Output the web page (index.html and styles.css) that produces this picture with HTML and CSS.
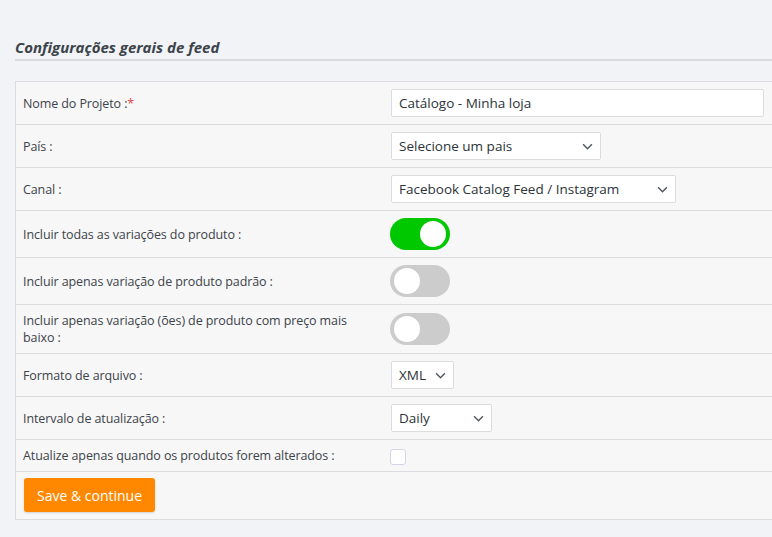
FILE: index.html
```html
<!DOCTYPE html>
<html lang="pt">
<head>
  <meta charset="UTF-8">
  <title>Configurações gerais de feed</title>
  <link rel="stylesheet" href="styles.css">
</head>
<body>
  <div class="wrap">
    <h2 class="title">Configurações gerais de feed</h2>

    <table class="form-table">
      <tr>
        <th>Nome do Projeto :<span class="req">*</span></th>
        <td><input type="text" class="text-input" value="Catálogo - Minha loja"></td>
      </tr>
      <tr>
        <th>País :</th>
        <td>
          <span class="select-box w-country">
            <select><option>Selecione um pais</option></select>
            <svg viewBox="0 0 10 6"><path d="M1 1l4 4 4-4" /></svg>
          </span>
        </td>
      </tr>
      <tr>
        <th>Canal :</th>
        <td>
          <span class="select-box w-channel">
            <select><option>Facebook Catalog Feed / Instagram</option></select>
            <svg viewBox="0 0 10 6"><path d="M1 1l4 4 4-4" /></svg>
          </span>
        </td>
      </tr>
      <tr>
        <th>Incluir todas as variações do produto :</th>
        <td><span class="toggle on"><span class="knob"></span></span></td>
      </tr>
      <tr>
        <th>Incluir apenas variação de produto padrão :</th>
        <td><span class="toggle"><span class="knob"></span></span></td>
      </tr>
      <tr>
        <th>Incluir apenas variação (ões) de produto com preço mais baixo :</th>
        <td><span class="toggle"><span class="knob"></span></span></td>
      </tr>
      <tr>
        <th>Formato de arquivo :</th>
        <td>
          <span class="select-box w-format">
            <select><option>XML</option></select>
            <svg viewBox="0 0 10 6"><path d="M1 1l4 4 4-4" /></svg>
          </span>
        </td>
      </tr>
      <tr>
        <th>Intervalo de atualização :</th>
        <td>
          <span class="select-box w-interval">
            <select><option>Daily</option></select>
            <svg viewBox="0 0 10 6"><path d="M1 1l4 4 4-4" /></svg>
          </span>
        </td>
      </tr>
      <tr class="row-check">
        <th>Atualize apenas quando os produtos forem alterados :</th>
        <td><span class="checkbox"></span></td>
      </tr>
      <tr class="row-btn">
        <td colspan="2"><button class="save-btn">Save &amp; continue</button></td>
      </tr>
    </table>
  </div>
</body>
</html>
```

FILE: styles.css
```css
html, body {
  margin: 0;
  padding: 0;
  overflow: hidden;
}
body {
  background-color: #f1f3f6;
  font-family: 'Open Sans', 'Noto Sans', sans-serif;
  font-size: 12.5px;
  letter-spacing: -0.1px;
  color: #3c434a;
}
.wrap {
  padding: 37px 0 0 15px;
  width: 800px;
}
.title {
  margin: 0;
  font-size: 15px;
  font-weight: 700;
  font-style: italic;
  letter-spacing: 0;
  color: #3c434a;
  line-height: 20px;
  padding-bottom: 2px;
  border-bottom: 2px solid #dcdcde;
}
.form-table {
  margin-top: 20px;
  width: 800px;
  border-collapse: collapse;
  background: #f7f7f7;
  border: 1px solid #dcdcde;
}
.form-table th,
.form-table td {
  border-top: 1px solid #dcdcde;
  padding: 7px 8px 7px 7px;
  vertical-align: middle;
  text-align: left;
}
.form-table th {
  width: 335px;
  padding-right: 33px;
  font-weight: 400;
  line-height: 17px;
}
.form-table td {
  padding-left: 0;
  height: 28px;
}
.req {
  color: #e0474c;
}
.text-input {
  box-sizing: border-box;
  width: 373px;
  height: 28px;
  padding: 0 7px;
  border: 1px solid #dcdcde;
  border-radius: 2px;
  background: #fff;
  font-family: inherit;
  font-size: 13.5px;
  color: #2c3338;
  display: block;
}
.select-box {
  position: relative;
  display: block;
}
.select-box select {
  box-sizing: border-box;
  appearance: none;
  -webkit-appearance: none;
  width: 100%;
  height: 28px;
  padding: 0 24px 0 7px;
  border: 1px solid #dcdcde;
  border-radius: 2px;
  background: #fff;
  font-family: inherit;
  font-size: 13.5px;
  color: #2c3338;
  display: block;
}
.select-box svg {
  position: absolute;
  right: 8px;
  top: 11px;
  width: 11px;
  height: 7px;
  fill: none;
  stroke: #50575e;
  stroke-width: 1.3;
  pointer-events: none;
}
.w-country { width: 210px; }
.w-channel { width: 285px; }
.w-format { width: 63px; }
.w-interval { width: 101px; }
.toggle {
  display: flex;
  align-items: center;
  box-sizing: border-box;
  width: 60px;
  height: 32px;
  margin-left: -1px;
  padding: 0 4px;
  border-radius: 16px;
  background: #ccc;
}
.toggle.on {
  background: #00c800;
  justify-content: flex-end;
}
.knob {
  width: 26px;
  height: 26px;
  border-radius: 50%;
  background: #fff;
}
.row-check td {
  height: 17px;
}
.checkbox {
  display: block;
  box-sizing: border-box;
  width: 16px;
  height: 16px;
  margin: 2px 0 -1px -1px;
  border: 1px solid #d6d3e6;
  border-radius: 3px;
  background: #fff;
}
.row-btn td {
  padding: 6px 8px 7px 8px;
  height: 34px;
}
.save-btn {
  display: block;
  width: 131px;
  height: 34px;
  border: none;
  border-radius: 3px;
  background: #ff8800;
  color: #fff;
  font-family: inherit;
  font-size: 14px;
  letter-spacing: 0;
  box-shadow: 0 1px 2px rgba(0,0,0,0.15);
}
```
